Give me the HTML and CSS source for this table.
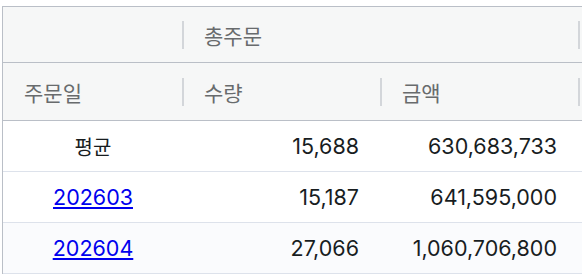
FILE: index.html
```html
<!DOCTYPE html>
<html lang="ko">
<head>
<meta charset="utf-8">
<title>총주문</title>
<link rel="stylesheet" href="styles.css">
</head>
<body>
<div class="grid">
  <div class="hrow top">
    <div class="hcell c1 sep"></div>
    <div class="hcell group sep">총주문</div>
    <div class="hcell c4"></div>
  </div>
  <div class="hrow">
    <div class="hcell c1 sep">주문일</div>
    <div class="hcell c2 sep">수량</div>
    <div class="hcell c3 sep">금액</div>
    <div class="hcell c4"></div>
  </div>
  <div class="row">
    <div class="cell c1 center">평균</div>
    <div class="cell c2 num">15,688</div>
    <div class="cell c3 num">630,683,733</div>
    <div class="cell c4"></div>
  </div>
  <div class="row">
    <div class="cell c1 center"><a href="#">202603</a></div>
    <div class="cell c2 num">15,187</div>
    <div class="cell c3 num">641,595,000</div>
    <div class="cell c4"></div>
  </div>
  <div class="row odd">
    <div class="cell c1 center"><a href="#">202604</a></div>
    <div class="cell c2 num">27,066</div>
    <div class="cell c3 num">1,060,706,800</div>
    <div class="cell c4"></div>
  </div>
</div>
</body>
</html>
```
FILE: styles.css
```css
html, body {
  margin: 0;
  padding: 0;
  overflow: hidden;
  background: #ffffff;
}
body {
  font-family: Inter, "Noto Sans CJK KR", sans-serif;
  font-size: 21.5px;
  color: #181d1f;
}
.grid {
  margin: 6px 0 0 2px;
  border-top: 1px solid #babfc7;
  border-left: 1px solid #babfc7;
}
.hrow {
  display: flex;
  height: 57px;
  background: #f6f7f7;
  border-bottom: 1px solid #babfc7;
}
.hrow.top { height: 55px; }
.hcell {
  position: relative;
  display: flex;
  align-items: center;
  padding-left: 21px;
  box-sizing: border-box;
  color: #686b6d;
  font-family: "Noto Sans CJK KR", sans-serif;
  font-size: 21px;
}
.sep::after {
  content: "";
  position: absolute;
  right: -1px;
  top: 50%;
  margin-top: -14px;
  width: 2px;
  height: 28px;
  background: #d3d6da;
}
.c1 { width: 180px; flex: none; }
.c2 { width: 198px; flex: none; }
.c3 { width: 198px; flex: none; }
.group { width: 396px; flex: none; }
.c4 { flex: 1; }
.row {
  display: flex;
  height: 50px;
  border-bottom: 1px solid #dde2eb;
  background: #ffffff;
}
.row.odd { background: #fafbfd; }
.cell {
  display: flex;
  align-items: center;
  box-sizing: border-box;
}
.center {
  justify-content: center;
  font-family: "Noto Sans CJK KR", Inter, sans-serif;
  font-size: 20px;
}
.center a {
  font-family: Inter, sans-serif;
  font-size: 21.5px;
  color: #0000ee;
  text-decoration: underline;
}
.num {
  justify-content: flex-end;
  padding-right: 22px;
}
```
